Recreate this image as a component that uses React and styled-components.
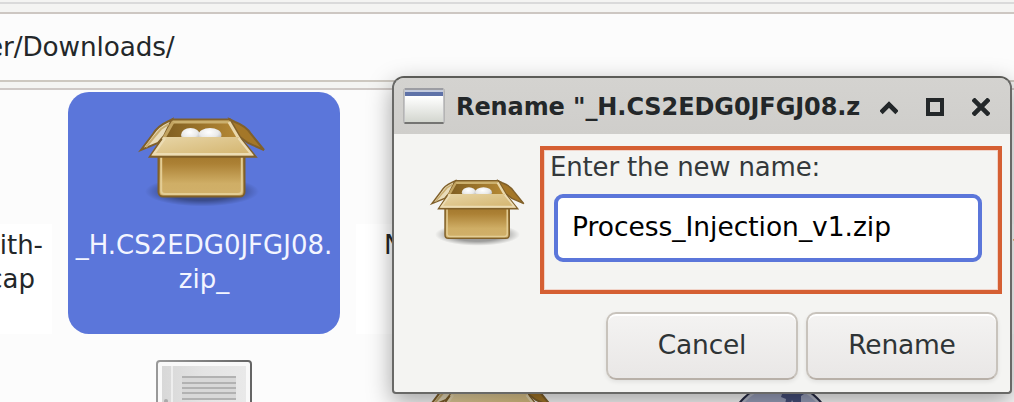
import React from 'react';
import styled, { createGlobalStyle } from 'styled-components';

const Global = createGlobalStyle`
  * { box-sizing: border-box; }
  html, body { margin: 0; height: 402px; overflow: hidden; background: #fcfcfc; }
  body { font-family: "DejaVu Sans", sans-serif; font-size: 26.3px; color: #232729; }
`;

const Desktop = styled.div`
  position: relative;
  width: 1014px;
  height: 402px;
  overflow: hidden;
`;

const Toolbar = styled.div`
  display: flex;
  flex-direction: column;
  height: 90px;
  padding-top: 2px;
  background: #f4f4f2;
  border-bottom: 2px solid #cfc9c6;
`;

const ToolbarLine = styled.div`
  height: 2px;
  margin-bottom: 8px;
  background: #dadada;
`;

const PathField = styled.div`
  display: flex;
  align-items: center;
  height: 70px;
  border-top: 2px solid #cdc7c2;
  border-bottom: 2px solid #cdc8c0;
  background: #fcfcfc;
  white-space: nowrap;
`;

const PathText = styled.span`
  margin-left: -13px;
  letter-spacing: -0.12px;
`;

const Files = styled.div`
  display: grid;
  grid-template-columns: repeat(5, 272px);
  gap: 16px;
  margin: 2px 0 0 -220px;
`;

const Item = styled.div`
  display: flex;
  flex-direction: column;
  height: 242px;
  color: ${(p) => (p.$selected ? '#f3f5ff' : '#232729')};
  background: ${(p) => (p.$selected ? '#5b76da' : 'transparent')};
  border-radius: ${(p) => (p.$selected ? '21px' : 0)};
`;

const Thumb = styled.div`
  display: flex;
  justify-content: center;
  height: 132px;
  padding-top: ${(p) => p.$top}px;
`;

const Label = styled.div`
  flex: 1;
  padding: 4px ${(p) => p.$right || 0}px 4px ${(p) => p.$left || 0}px;
  line-height: 34px;
  text-align: ${(p) => p.$align || 'center'};
  background: ${(p) => (p.$selected ? 'transparent' : '#fff')};
  font-size: 26px;
  white-space: nowrap;
`;

const LabelTail = styled.span`
  margin-right: 8px;
`;

const Dialog = styled.section`
  position: absolute;
  left: 392px;
  top: 76px;
  width: 620px;
  height: 318px;
  display: flex;
  flex-direction: column;
  border: 2px solid #696967;
  border-top-color: #5c5c58;
  border-radius: 12px 12px 4px 4px;
  background: #f4f4f2;
  box-shadow: 0 8px 24px rgba(0, 0, 0, 0.36);
  overflow: hidden;
`;

const TitleBar = styled.header`
  display: flex;
  align-items: center;
  flex: none;
  height: 56px;
  padding: 0 20px 0 9px;
  background: linear-gradient(#d4d3d0, #cfcecb);
`;

const Title = styled.h1`
  flex: none;
  width: 407px;
  margin: 0 0 0 11px;
  padding-top: 2px;
  font-size: 24px;
  font-weight: bold;
  line-height: 30px;
  letter-spacing: -0.09px;
  white-space: nowrap;
`;

const Controls = styled.div`
  display: flex;
  gap: 28px;
  margin-left: auto;
  padding-top: 2px;
`;

const Body = styled.div`
  display: flex;
  height: 160px;
  padding: 12px 8px 0 29px;
`;

const SmallIcon = styled.div`
  width: 117px;
  padding-top: 24px;
`;

const FieldGroup = styled.div`
  width: 462px;
  height: 148px;
  padding: 2px 0 0 6px;
  border: 4px solid #d55f33;
  outline: 1px solid #f1d3c8;
  outline-offset: -5px;
`;

const FieldLabel = styled.label`
  display: block;
  height: 42px;
  line-height: 31px;
  font-size: 26px;
  letter-spacing: -0.18px;
  color: #34393b;
`;

const Entry = styled.div`
  display: flex;
  align-items: center;
  width: 428px;
  height: 68px;
  margin-left: 4px;
  padding: 0 0 3px 14px;
  border: 4px solid #5b76da;
  border-radius: 9px;
  background: #fff;
  color: #000;
  font-size: 26.5px;
  letter-spacing: -0.03px;
`;

const Actions = styled.footer`
  display: flex;
  justify-content: flex-end;
  gap: 8px;
  padding: 18px 12px 0 0;
`;

const Button = styled.button`
  width: 192px;
  height: 68px;
  padding: 0 0 3px;
  border: 2px solid #c8c3bc;
  border-bottom-color: #b8b0a8;
  border-radius: 10px;
  background: linear-gradient(#f4f3f2, #e9e7e6);
  box-shadow: inset 0 2px #fff, 0 2px 4px rgba(0, 0, 0, 0.08);
  color: #2e3436;
  font: 26.5px "DejaVu Sans", sans-serif;
  letter-spacing: -0.2px;
`;

const Drawing = styled.svg`
  display: block;
  flex: none;
`;

function BoxIcon({ id, width = 150 }) {
  const u = (n) => `url(#${id}-${n})`;
  return (
    <Drawing width={width} height={(width * 110) / 150} viewBox="0 0 150 110">
      <defs>
        <linearGradient id={`${id}-front`} x1="0" y1="0" x2="0" y2="1">
          <stop offset="0" stopColor="#a0752a" /><stop offset=".25" stopColor="#ac8135" /><stop offset=".7" stopColor="#cfae66" /><stop offset="1" stopColor="#d1b06a" />
        </linearGradient>
        <linearGradient id={`${id}-flap`} x1="0" y1="0" x2="1" y2="1">
          <stop offset="0" stopColor="#e8d6a8" /><stop offset="1" stopColor="#d2b26a" />
        </linearGradient>
        <linearGradient id={`${id}-in`}>
          <stop offset="0" stopColor="#7d5c20" /><stop offset="1" stopColor="#b88b36" />
        </linearGradient>
        <radialGradient id={`${id}-ball`} cx=".45" cy=".3" r=".75">
          <stop offset="0" stopColor="#fff" /><stop offset=".55" stopColor="#e9e9e9" /><stop offset="1" stopColor="#aaa" />
        </radialGradient>
        <radialGradient id={`${id}-shade`}>
          <stop offset=".6" stopColor="#000" stopOpacity=".36" /><stop offset="1" stopColor="#000" stopOpacity="0" />
        </radialGradient>
      </defs>
      <ellipse cx="73" cy="86.5" rx="57" ry="15" fill={u('shade')} />
      <path d="M44 14.5H101L112 36H32Z" fill={u('in')} stroke="#80602a" strokeWidth="2" />
      <path d="M43 17H102" stroke="#cbb06e" strokeWidth="3.2" />
      <path d="M101 14.5L106 17Q117 21 122 29L135 45L119 38L111 32Z" fill="#a47728" stroke="#80602a" strokeWidth="2" />
      <path d="M43 14.5L38 17Q29 21 24 29L12 45L29 38L35 31Z" fill="#e9dcba" stroke="#80602a" strokeWidth="2" />
      <path d="M40 19L32 24L26 31L17 42" fill="none" stroke="#c9ad70" strokeWidth="2" />
      <path d="M100 17L110 34" stroke="#ead8aa" strokeWidth="3" />
      <path d="M44 17L35 33" stroke="#c3a461" strokeWidth="3" />
      <ellipse cx="61.5" cy="30" rx="9.5" ry="7" fill={u('ball')} />
      <ellipse cx="81" cy="30" rx="11.5" ry="7" fill={u('ball')} />
      <rect x="29.5" y="48" width="86" height="43.5" rx="4.5" fill={u('front')} stroke="#80602a" strokeWidth="2" />
      <path d="M32.2 52V85.5Q32.2 89 36 89H109Q112.8 89 112.8 85.5V52" fill="none" stroke="#e3cd95" strokeWidth="2" />
      <path d="M34 32H110L126.5 51.5H20.5Z" fill={u('flap')} />
      <path d="M33 34L21 51.7H126.5L112 34" fill="none" stroke="#80602a" strokeWidth="2.2" />
      <path d="M36 33L24.5 49.2H122.5L109.5 33" fill="none" stroke="#ecdcb4" strokeWidth="2.4" />
    </Drawing>
  );
}

function DocumentIcon() {
  return (
    <Drawing width="96" height="60" viewBox="0 0 96 60">
      <defs>
        <linearGradient id="doc-edge"><stop stopColor="#999" /><stop offset="1" stopColor="#656565" /></linearGradient>
        <linearGradient id="doc-page"><stop stopColor="#d8d8d8" /><stop offset=".5" stopColor="#e4e4e4" /><stop offset="1" stopColor="#e9e9e9" /></linearGradient>
      </defs>
      <rect x="1" y="1" width="94" height="100" rx="3" fill="#f9f9f9" stroke="url(#doc-edge)" strokeWidth="2" />
      <rect x="6" y="6" width="84" height="90" fill="url(#doc-page)" />
      <path d="M16 6V60" stroke="#eee" strokeWidth="2" />
      <path d="M26 16H80V40H26Z" fill="#d8d8d8" />
      <path d="M26 17H80M26 23H80M26 28H80M26 33H80M26 39H80" stroke="#b2b2b2" strokeWidth="2" />
      <circle cx="10" cy="41" r="2" fill="#aaa" />
    </Drawing>
  );
}

function GlobeIcon() {
  return (
    <Drawing width="110" height="60" viewBox="0 0 110 60">
      <circle cx="55.5" cy="54" r="52" fill="#9ba2bd" stroke="#252943" strokeWidth="2" />
      <circle cx="55.5" cy="54" r="49.5" fill="none" stroke="#b8bccb" strokeWidth="2" />
      <path d="M66 8L65 12L57 13L56 16L61 18L60 24H65L67 19L70 24H76V15L79 13V6Z" fill="#46507c" />
    </Drawing>
  );
}

function WindowIcon() {
  return (
    <Drawing width="42" height="38" viewBox="0 0 42 38">
      <defs>
        <linearGradient id="win" x1="0" y1="0" x2="0" y2="1"><stop offset=".2" stopColor="#fff" /><stop offset="1" stopColor="#d3d6cf" /></linearGradient>
      </defs>
      <rect x=".5" y="1.5" width="41" height="35" rx="2" fill="#c4c4c6" stroke="#b4b4b3" />
      <rect x="2" y="3" width="38" height="32" fill="url(#win)" />
      <path d="M2 2H40" stroke="#9c9da3" strokeWidth="2" />
      <path d="M2 7H40" stroke="#5f72a8" strokeWidth="4" />
      <path d="M2 4H40" stroke="#c4cbdd" strokeWidth="2" />
      <path d="M1.5 36H40.5" stroke="#747472" strokeWidth="2" />
    </Drawing>
  );
}

function ControlIcon({ children }) {
  return (
    <Drawing width="18" height="18" viewBox="0 0 18 18" fill="none" stroke="#232729" strokeWidth="4">
      {children}
    </Drawing>
  );
}

export default function App() {
  return (
    <Desktop>
      <Global />
      <Toolbar>
        <ToolbarLine />
        <PathField><PathText>er/Downloads/</PathText></PathField>
      </Toolbar>
      <Files>
        <Item>
          <Thumb $top={13} />
          <Label $align="right" $right={9}>with-<br /><LabelTail>pcap</LabelTail></Label>
        </Item>
        <Item $selected>
          <Thumb $top={13}><BoxIcon id="zip" /></Thumb>
          <Label $selected>_H.CS2EDG0JFGJ08.<br />zip_</Label>
        </Item>
        <Item><Thumb $top={13} /><Label $align="left" $left={28}>N</Label></Item>
        <Item><Thumb $top={13} /><Label /></Item>
        <Item><Thumb $top={13} /><Label $align="left" $left={81}>t</Label></Item>
        <Item />
        <Item><Thumb $top={10}><DocumentIcon /></Thumb></Item>
        <Item><Thumb $top={12}><BoxIcon id="archive" /></Thumb></Item>
        <Item><Thumb $top={31}><GlobeIcon /></Thumb></Item>
      </Files>
      <Dialog>
        <TitleBar>
          <WindowIcon />
          <Title>Rename "_H.CS2EDG0JFGJ08.z</Title>
          <Controls>
            <ControlIcon><path d="M1 14.5L9 6.5L17 14.5" strokeWidth="4.6" /></ControlIcon>
            <ControlIcon><path d="M2 2H16V16H2Z" /></ControlIcon>
            <ControlIcon><path d="M1 1L17 17M17 1L1 17" strokeWidth="4.6" /></ControlIcon>
          </Controls>
        </TitleBar>
        <Body>
          <SmallIcon><BoxIcon id="small" width={112} /></SmallIcon>
          <FieldGroup>
            <FieldLabel>Enter the new name:</FieldLabel>
            <Entry>Process_Injection_v1.zip</Entry>
          </FieldGroup>
        </Body>
        <Actions>
          <Button>Cancel</Button>
          <Button>Rename</Button>
        </Actions>
      </Dialog>
    </Desktop>
  );
}
